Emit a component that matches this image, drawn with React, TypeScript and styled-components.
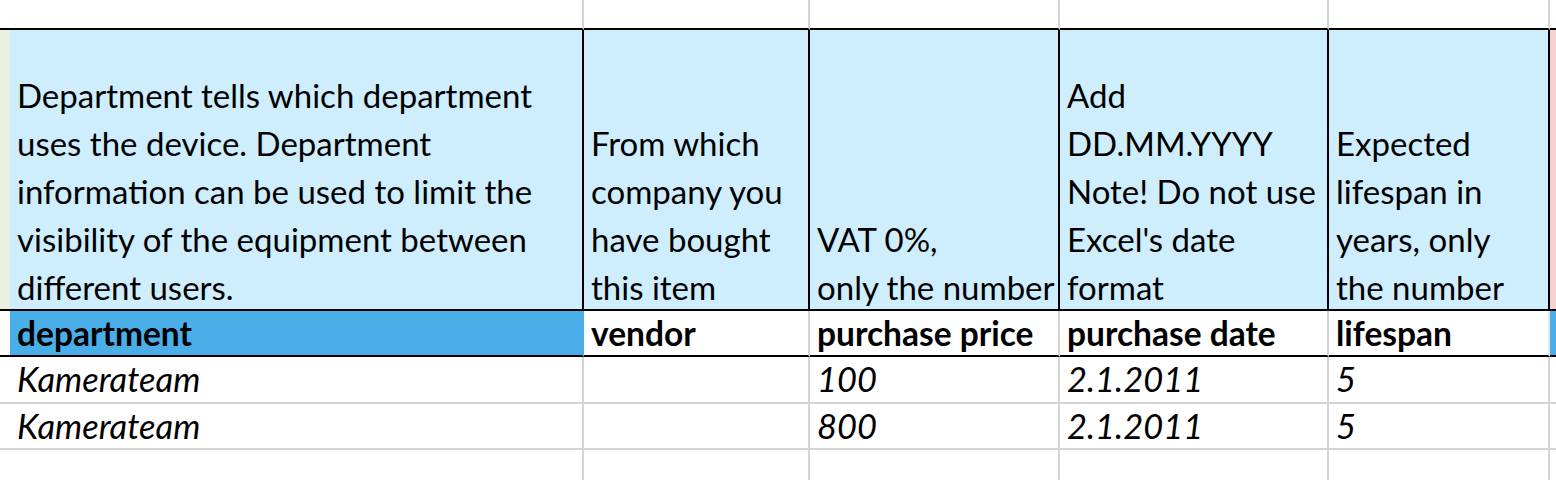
import React from "react";
import styled, { createGlobalStyle } from "styled-components";

const GlobalStyle = createGlobalStyle`
  html, body { margin: 0; padding: 0; background: #ffffff; }
  body { font-family: "Lato", "Open Sans", sans-serif; color: #000; overflow: hidden; }
  * { box-sizing: border-box; }
`;

const GRID = "#d4d4d4";
const BLACK = "#000000";
const LIGHT_BLUE = "#ceeefe";
const HEADER_BLUE = "#4aaee8";
const PINK = "#f5d3d3";
const PALE_GREEN = "#ebf1e1";

const Sheet = styled.div`
  display: grid;
  grid-template-columns: 10px 574px 226px 250px 269px 221px 1fr;
  grid-template-rows: 30px 281px 46px 47px 46px 1fr;
  width: 1556px;
  height: 500px;
  background: #fff;
`;

type Kind = "blank" | "desc" | "head" | "data";

const Cell = styled.div<{ $bg?: string; $right?: string; $bottom?: string; $kind: Kind }>`
  background: ${(p) => p.$bg || "#ffffff"};
  border-right: 2px solid ${(p) => p.$right || GRID};
  border-bottom: 2px solid ${(p) => p.$bottom || GRID};
  white-space: nowrap;
  min-width: 0;
  padding: 0 4px 0 7px;
  display: flex;
  flex-direction: column;
  justify-content: ${(p) => (p.$kind === "desc" ? "flex-end" : "flex-start")};
  font-size: ${(p) => (p.$kind === "head" ? "33.5px" : p.$kind === "data" ? "34.5px" : "33px")};
  font-weight: ${(p) => (p.$kind === "head" ? 700 : 400)};
  font-style: ${(p) => (p.$kind === "data" ? "italic" : "normal")};
  line-height: ${(p) => (p.$kind === "desc" ? "48px" : "44px")};
`;

const DescLines = styled.div`
  margin-bottom: -2px;
`;

const Line = styled.div``;

const descriptions: string[][] = [
  [],
  [
    "Department tells which department",
    "uses the device. Department",
    "information can be used to limit the",
    "visibility of the equipment between",
    "different users.",
  ],
  ["From which", "company you", "have bought", "this item"],
  ["VAT 0%,", "only the number"],
  ["Add", "DD.MM.YYYY", "Note! Do not use", "Excel's date", "format"],
  ["Expected", "lifespan in", "years, only", "the number"],
  [],
];

const headers = ["", "department", "vendor", "purchase price", "purchase date", "lifespan", ""];

const dataRows: string[][] = [
  ["", "Kamerateam", "", "100", "2.1.2011", "5", ""],
  ["", "Kamerateam", "", "800", "2.1.2011", "5", ""],
  ["", "", "", "", "", "", ""],
];

const COLS = 7;

export default function App() {
  const cells: React.ReactNode[] = [];

  // Row 0: blank row above the table
  for (let c = 0; c < COLS; c++) {
    cells.push(<Cell key={`r0-${c}`} $kind="blank" $bottom={BLACK} />);
  }

  // Row 1: descriptions
  descriptions.forEach((lines, c) => {
    const bg = c === 0 ? PALE_GREEN : c === COLS - 1 ? PINK : LIGHT_BLUE;
    cells.push(
      <Cell key={`r1-${c}`} $kind="desc" $bg={bg} $right={c === COLS - 1 ? GRID : BLACK} $bottom={BLACK}>
        <DescLines>
          {lines.map((l) => (
            <Line key={l}>{l}</Line>
          ))}
        </DescLines>
      </Cell>
    );
  });

  // Row 2: field names
  headers.forEach((h, c) => {
    const blue = c === 1 || c === COLS - 1;
    const right = c === 0 || c === 1 ? HEADER_BLUE : c === 5 ? "#e6e6e6" : GRID;
    cells.push(
      <Cell key={`r2-${c}`} $kind="head" $bg={blue ? HEADER_BLUE : "#ffffff"} $right={right} $bottom={BLACK}>
        {h}
      </Cell>
    );
  });

  // Rows 3..5: data
  dataRows.forEach((row, r) => {
    row.forEach((v, c) => {
      cells.push(
        <Cell key={`r${r + 3}-${c}`} $kind="data">
          {v}
        </Cell>
      );
    });
  });

  return (
    <>
      <GlobalStyle />
      <Sheet>{cells}</Sheet>
    </>
  );
}
